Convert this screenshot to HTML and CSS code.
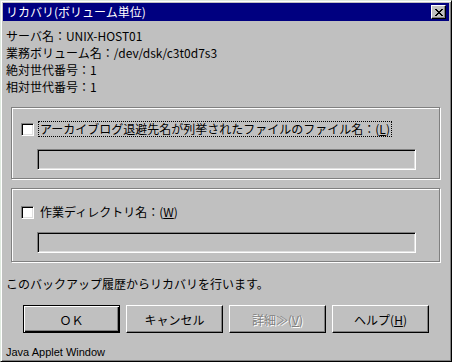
FILE: index.html
```html
<!DOCTYPE html>
<html lang="ja">
<head>
    <meta charset="UTF-8">
    <title>リカバリ(ボリューム単位)</title>
    <link rel="stylesheet" href="styles.css">
</head>
<body>
    <div class="window">
        <div class="titlebar">
            <span class="title">リカバリ(ボリューム単位)</span>
            <span class="close-btn">
                <svg width="8" height="7" viewBox="0 0 8 7" shape-rendering="crispEdges">
                    <path d="M0 0h2v1h1v1h2v-1h1v-1h2v1h-1v1h-1v1h-1v1h1v1h1v1h1v1h-2v-1h-1v-1h-2v1h-1v1h-2v-1h1v-1h1v-1h1v-1h-1v-1h-1v-1h-1z" fill="#000"/>
                </svg>
            </span>
        </div>
        <div class="content">
            <div class="info">
                <div>サーバ名：UNIX-HOST01</div>
                <div>業務ボリューム名：/dev/dsk/c3t0d7s3</div>
                <div>絶対世代番号：1</div>
                <div>相対世代番号：1</div>
            </div>

            <div class="group group-archive">
                <div class="check-row">
                    <span class="checkbox"></span>
                    <span class="check-label focused">アーカイブログ退避先名が列挙されたファイルのファイル名：(<u>L</u>)</span>
                </div>
                <div class="field"></div>
            </div>

            <div class="group group-workdir">
                <div class="check-row">
                    <span class="checkbox"></span>
                    <span class="check-label">作業ディレクトリ名：(<u>W</u>)</span>
                </div>
                <div class="field"></div>
            </div>

            <p class="message">このバックアップ履歴からリカバリを行います。</p>

            <div class="buttons">
                <button class="btn btn-default">ＯＫ</button>
                <button class="btn">キャンセル</button>
                <button class="btn btn-disabled">詳細≫(<u>V</u>)</button>
                <button class="btn">ヘルプ(<u>H</u>)</button>
            </div>

            <div class="applet-note">Java Applet Window</div>
        </div>
    </div>
</body>
</html>
```

FILE: styles.css
```css
body {
    margin: 0;
    background: #c0c0c0;
    font-family: "Noto Sans CJK JP", sans-serif;
    font-size: 12px;
    color: #000;
}

.window {
    width: 452px;
    height: 362px;
    box-sizing: border-box;
    border-top: 1px solid #dfeadf;
    border-left: 1px solid #dfeadf;
    border-right: 1px solid #000;
    border-bottom: 1px solid #000;
    box-shadow: inset 1px 1px 0 #fff, inset -1px -1px 0 #808080;
    padding: 2px;
    background: #c0c0c0;
    display: flex;
    flex-direction: column;
    overflow: hidden;
}

.titlebar {
    height: 18px;
    background: #000080;
    color: #fff;
    display: flex;
    align-items: center;
    justify-content: space-between;
    padding-left: 3px;
}

.title {
    line-height: 18px;
    white-space: nowrap;
}

.close-btn {
    width: 15px;
    height: 14px;
    box-sizing: border-box;
    margin-right: 3px;
    background: #c0c0c0;
    border-top: 1px solid #fff;
    border-left: 1px solid #fff;
    border-right: 1px solid #000;
    border-bottom: 1px solid #000;
    box-shadow: inset -1px -1px 0 #808080;
    display: flex;
    align-items: center;
    justify-content: center;
}

.content {
    flex: 1;
    padding: 6px 0 0 3px;
    display: flex;
    flex-direction: column;
}

.info {
    line-height: 17px;
    white-space: nowrap;
}

.group {
    width: 429px;
    box-sizing: border-box;
    margin-left: 5px;
    border: 1px solid #808080;
    box-shadow: inset 1px 1px 0 #fff, 1px 1px 0 #fff;
    padding: 13px 0 8px 9px;
}

.group-archive {
    margin-top: 12px;
}

.group-workdir {
    margin-top: 9px;
    padding-top: 15px;
}

.check-row {
    display: flex;
    align-items: center;
    height: 16px;
}

.checkbox {
    width: 13px;
    height: 13px;
    box-sizing: border-box;
    background: #fff;
    border-top: 1px solid #808080;
    border-left: 1px solid #808080;
    border-right: 1px solid #fff;
    border-bottom: 1px solid #fff;
    box-shadow: inset 1px 1px 0 #000, inset -1px -1px 0 #dfdfdf;
}

.check-label {
    margin-left: 4px;
    line-height: 14px;
    padding: 0 1px;
    border: 1px dotted transparent;
    white-space: nowrap;
}

.check-label.focused {
    border-color: #000;
}

.field {
    width: 379px;
    height: 21px;
    box-sizing: border-box;
    margin: 12px 0 0 16px;
    background: #c0c0c0;
    border-top: 1px solid #808080;
    border-left: 1px solid #808080;
    border-right: 1px solid #fff;
    border-bottom: 1px solid #fff;
    box-shadow: inset 1px 1px 0 #000, inset -1px -1px 0 #dfdfdf;
}

.message {
    margin: 13px 0 0;
    line-height: 17px;
    white-space: nowrap;
}

.buttons {
    display: flex;
    gap: 6px;
    margin: 13px 0 0 17px;
}

.btn {
    width: 97px;
    height: 28px;
    box-sizing: border-box;
    padding: 0;
    font-family: inherit;
    font-size: 12px;
    color: #000;
    background: #c0c0c0;
    border-top: 1px solid #fff;
    border-left: 1px solid #fff;
    border-right: 1px solid #000;
    border-bottom: 1px solid #000;
    box-shadow: inset -1px -1px 0 #808080;
    white-space: nowrap;
}

.btn-default {
    border: 1px solid #000;
    box-shadow: inset 1px 1px 0 #fff, inset -1px -1px 0 #000, inset -2px -2px 0 #808080;
}

.btn-disabled {
    color: #808080;
    text-shadow: 1px 1px 0 #fff;
}

.applet-note {
    margin-top: 12px;
    line-height: 14px;
    font-family: "Liberation Sans", sans-serif;
    font-size: 11px;
}
```
